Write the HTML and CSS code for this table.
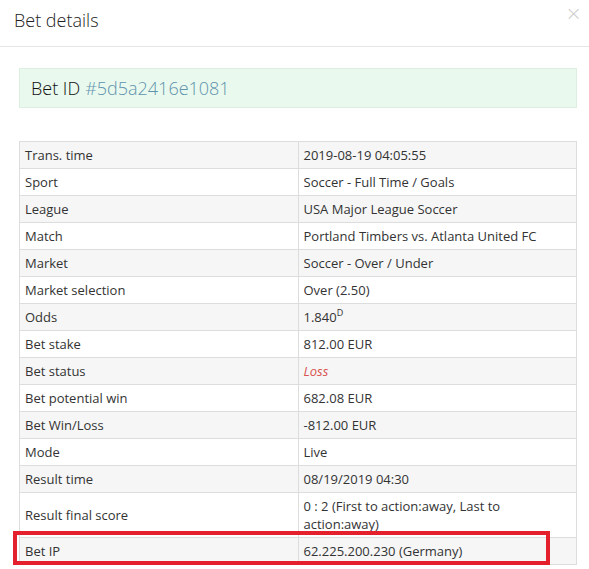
FILE: index.html
```html
<!DOCTYPE html>
<html>
<head>
<meta charset="utf-8">
<link rel="stylesheet" href="styles.css">
</head>
<body>
<div class="modal">
  <div class="modal-header">
    <h4 class="modal-title">Bet details</h4>
    <span class="close">&times;</span>
  </div>
  <div class="modal-body">
    <div class="bet-id">Bet ID <span class="hash">#5d5a2416e1081</span></div>
    <table class="details">
      <tr><td>Trans. time</td><td>2019-08-19 04:05:55</td></tr>
      <tr><td>Sport</td><td>Soccer - Full Time / Goals</td></tr>
      <tr><td>League</td><td>USA Major League Soccer</td></tr>
      <tr><td>Match</td><td>Portland Timbers vs. Atlanta United FC</td></tr>
      <tr><td>Market</td><td>Soccer - Over / Under</td></tr>
      <tr><td>Market selection</td><td>Over (2.50)</td></tr>
      <tr><td>Odds</td><td>1.840<sup>D</sup></td></tr>
      <tr><td>Bet stake</td><td>812.00 EUR</td></tr>
      <tr><td>Bet status</td><td><span class="loss">Loss</span></td></tr>
      <tr><td>Bet potential win</td><td>682.08 EUR</td></tr>
      <tr><td>Bet Win/Loss</td><td>-812.00 EUR</td></tr>
      <tr><td>Mode</td><td>Live</td></tr>
      <tr><td>Result time</td><td>08/19/2019 04:30</td></tr>
      <tr><td>Result final score</td><td>0 : 2 (First to action:away, Last to action:away)</td></tr>
      <tr><td>Bet IP</td><td>62.225.200.230 (Germany)</td></tr>
    </table>
  </div>
  <div class="highlight"></div>
</div>
</body>
</html>
```

FILE: styles.css
```css
html, body {
  margin: 0;
  padding: 0;
  background: #ffffff;
}
body {
  font-family: "Open Sans", "Noto Sans", sans-serif;
  color: #333333;
  font-size: 13px;
  overflow: hidden;
}
.modal {
  position: relative;
  width: 589px;
}
.modal-header {
  height: 47px;
  border-bottom: 1px solid #e5e5e5;
  box-sizing: border-box;
  padding: 0 15px 0 14px;
  display: flex;
  align-items: flex-start;
  justify-content: space-between;
}
.modal-title {
  margin: 0;
  padding-top: 7px;
  font-size: 18px;
  font-weight: 300;
  line-height: 26px;
  color: #222;
}
.close {
  color: #cccccc;
  font-size: 20px;
  line-height: 20px;
  padding-top: 3px;
  margin-right: -8px;
  font-family: "DejaVu Sans", sans-serif;
  font-weight: 300;
}
.modal-body {
  padding: 21px 12px 0 19px;
}
.bet-id {
  height: 40px;
  box-sizing: border-box;
  background: #e9f9ed;
  border: 1px solid #dcefe0;
  padding: 0 11px;
  display: flex;
  align-items: center;
  font-size: 18px;
  font-weight: 300;
  color: #111;
  margin-bottom: 33px;
}
.bet-id .hash {
  color: #5f93ad;
  margin-left: 5px;
}
.details {
  width: 100%;
  border-collapse: collapse;
  table-layout: fixed;
}
.details td {
  border: 1px solid #dddddd;
  padding: 4px 5px;
  line-height: 18px;
  vertical-align: middle;
  color: #333;
}
.details tr:nth-child(odd) td {
  background: #f6f6f6;
}
.details sup {
  font-size: 9px;
  line-height: 0;
  vertical-align: 6px;
}
.loss {
  color: #d9534f;
  font-style: italic;
}
.highlight {
  position: absolute;
  left: 13px;
  top: 531px;
  width: 537px;
  height: 34px;
  box-sizing: border-box;
  border: 4.5px solid #e3202b;
  pointer-events: none;
}
```
